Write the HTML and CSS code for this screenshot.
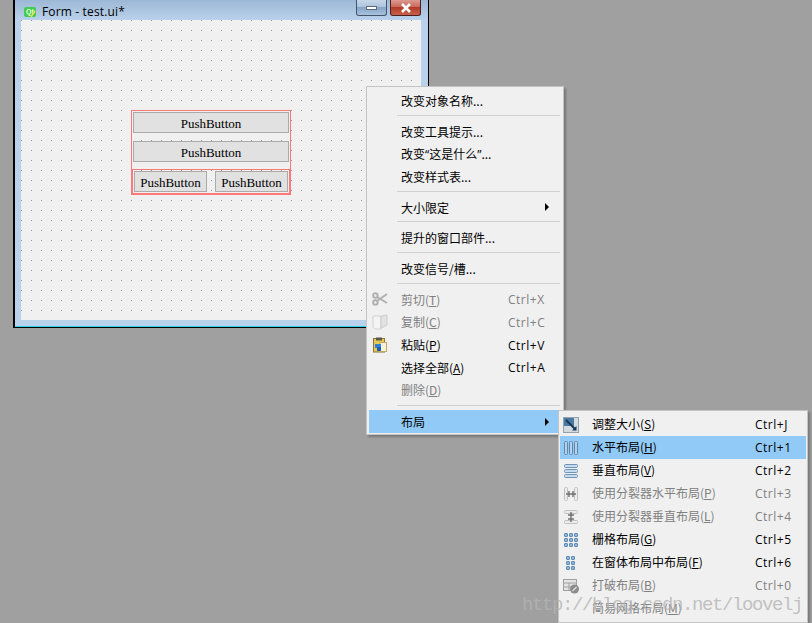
FILE: index.html
```html
<!DOCTYPE html>
<html lang="zh-CN">
  <head>
    <meta charset="UTF-8" />
    <title>Form - test.ui*</title>
    <link rel="stylesheet" href="styles.css">
  </head>
  <body>
    <div class="window">
      <div class="titlebar">
        <span class="qt-icon">
          <span class="qt-text">Qt</span>
          <svg class="qt-pen" width="6" height="7" viewBox="0 0 6 7"><path d="M1 7l4-6" stroke="#f4e04a" stroke-width="1.4" fill="none"/></svg>
        </span>
        <span class="title">Form - test.ui*</span>
        <span class="win-btn min-btn"><span class="min-dash"></span></span>
        <span class="win-btn close-btn">
          <svg width="14" height="10" viewBox="0 0 14 10"><path d="M3 1l8 8M11 1l-8 8" stroke="#fff" stroke-width="2.6" fill="none"/></svg>
        </span>
      </div>
      <div class="form">
        <div class="layout-box">
          <div class="push-btn">PushButton</div>
          <div class="push-btn">PushButton</div>
          <div class="layout-row">
            <div class="push-btn">PushButton</div>
            <div class="push-btn">PushButton</div>
          </div>
        </div>
      </div>
    </div>

    <div class="menu main-menu">
      <div class="item"><span class="slot"></span><span class="label">改变对象名称...</span></div>
      <div class="sep"></div>
      <div class="item"><span class="slot"></span><span class="label">改变工具提示...</span></div>
      <div class="item"><span class="slot"></span><span class="label">改变<span class="quote">“</span>这是什么<span class="quote">”</span>...</span></div>
      <div class="item"><span class="slot"></span><span class="label">改变样式表...</span></div>
      <div class="sep"></div>
      <div class="item"><span class="slot"></span><span class="label">大小限定</span><span class="arrow"></span></div>
      <div class="sep"></div>
      <div class="item"><span class="slot"></span><span class="label">提升的窗口部件...</span></div>
      <div class="sep"></div>
      <div class="item"><span class="slot"></span><span class="label">改变信号/槽...</span></div>
      <div class="sep"></div>
      <div class="item off">
        <span class="slot">
          <svg width="16" height="16" viewBox="0 0 16 16"><g fill="none" stroke="#b0b0b0" stroke-width="2"><path d="M5 6L15 12M5 10L15 3"/><circle cx="3.4" cy="4.5" r="2.2"/><circle cx="3.4" cy="11.5" r="2.2"/></g></svg>
        </span>
        <span class="label">剪切(<u>T</u>)</span><span class="key">Ctrl+X</span>
      </div>
      <div class="item off">
        <span class="slot">
          <svg width="16" height="16" viewBox="0 0 16 16"><path d="M1 2h7l1 1v12H3l-2-2z" fill="#f4f4f4" stroke="#d0d0d0"/><path d="M9 2l6-1v10l-6 3z" fill="#e2e2e2" stroke="#cccccc"/></svg>
        </span>
        <span class="label">复制(<u>C</u>)</span><span class="key">Ctrl+C</span>
      </div>
      <div class="item">
        <span class="slot">
          <svg width="16" height="16" viewBox="0 0 16 16"><rect x="1.5" y="1.5" width="11" height="13.5" fill="#e8c858" stroke="#8a7430"/><rect x="4" y="0.5" width="6" height="3" fill="#5a5a4a"/><rect x="8" y="5.5" width="6.5" height="9" fill="#f8f2d8" stroke="#c0a860"/><path d="M3 7h6v4H3z" fill="#2f7fd6"/><path d="M5 10h4v4H5z" fill="#1d5fb0"/></svg>
        </span>
        <span class="label">粘贴(<u>P</u>)</span><span class="key">Ctrl+V</span>
      </div>
      <div class="item"><span class="slot"></span><span class="label">选择全部(<u>A</u>)</span><span class="key">Ctrl+A</span></div>
      <div class="item off"><span class="slot"></span><span class="label">删除(<u>D</u>)</span></div>
      <div class="sep sep-wide"></div>
      <div class="item active"><span class="slot"></span><span class="label">布局</span><span class="arrow"></span></div>
    </div>

    <div class="menu sub-menu">
      <div class="item">
        <span class="slot">
          <svg width="16" height="16" viewBox="0 0 16 16"><rect x="0.5" y="0.5" width="15" height="15" fill="#d4dbe0" stroke="#94a2ae"/><path d="M1 1h10v8H1z" fill="#4a7aa0"/><path d="M3 3l9 9" stroke="#12385c" stroke-width="2"/><path d="M13.5 13.5H9L13.5 9z" fill="#12385c"/></svg>
        </span>
        <span class="label">调整大小(<u>S</u>)</span><span class="key">Ctrl+J</span>
      </div>
      <div class="item active">
        <span class="slot">
          <svg width="16" height="16" viewBox="0 0 16 16"><g fill="#b4d2ec" stroke="#5f86a8"><rect x="1.5" y="1.5" width="3" height="13" rx="1"/><rect x="6.5" y="1.5" width="3" height="13" rx="1"/><rect x="11.5" y="1.5" width="3" height="13" rx="1"/></g></svg>
        </span>
        <span class="label">水平布局(<u>H</u>)</span><span class="key">Ctrl+1</span>
      </div>
      <div class="item">
        <span class="slot">
          <svg width="16" height="16" viewBox="0 0 16 16"><g fill="#c5dcf0" stroke="#6f93b4"><rect x="1.5" y="1.5" width="13" height="3" rx="1"/><rect x="1.5" y="6.5" width="13" height="3" rx="1"/><rect x="1.5" y="11.5" width="13" height="3" rx="1"/></g></svg>
        </span>
        <span class="label">垂直布局(<u>V</u>)</span><span class="key">Ctrl+2</span>
      </div>
      <div class="item off">
        <span class="slot">
          <svg width="16" height="16" viewBox="0 0 16 16"><g fill="#ececec" stroke="#c0c0c0"><rect x="1.5" y="1.5" width="3" height="13" rx="1"/><rect x="11.5" y="1.5" width="3" height="13" rx="1"/></g><path d="M3 8h10M6 5v6M10 5v6" stroke="#707070" stroke-width="1.4"/></svg>
        </span>
        <span class="label">使用分裂器水平布局(<u>P</u>)</span><span class="key">Ctrl+3</span>
      </div>
      <div class="item off">
        <span class="slot">
          <svg width="16" height="16" viewBox="0 0 16 16"><g fill="#ececec" stroke="#c0c0c0"><rect x="1.5" y="1.5" width="13" height="3" rx="1"/><rect x="1.5" y="11.5" width="13" height="3" rx="1"/></g><path d="M8 3v10M5 6h6M5 10h6" stroke="#707070" stroke-width="1.4"/></svg>
        </span>
        <span class="label">使用分裂器垂直布局(<u>L</u>)</span><span class="key">Ctrl+4</span>
      </div>
      <div class="item">
        <span class="slot">
          <svg width="16" height="16" viewBox="0 0 16 16"><g fill="#8fb6dc" stroke="#5f8ab2"><rect x="1.5" y="1.5" width="3" height="3" rx="0.5"/><rect x="6.5" y="1.5" width="3" height="3" rx="0.5"/><rect x="11.5" y="1.5" width="3" height="3" rx="0.5"/><rect x="1.5" y="6.5" width="3" height="3" rx="0.5"/><rect x="6.5" y="6.5" width="3" height="3" rx="0.5"/><rect x="11.5" y="6.5" width="3" height="3" rx="0.5"/><rect x="1.5" y="11.5" width="3" height="3" rx="0.5"/><rect x="6.5" y="11.5" width="3" height="3" rx="0.5"/><rect x="11.5" y="11.5" width="3" height="3" rx="0.5"/></g></svg>
        </span>
        <span class="label">栅格布局(<u>G</u>)</span><span class="key">Ctrl+5</span>
      </div>
      <div class="item">
        <span class="slot">
          <svg width="16" height="16" viewBox="0 0 16 16"><g fill="#8fb6dc" stroke="#5f8ab2"><rect x="3.5" y="1.5" width="3" height="3" rx="0.5"/><rect x="8.5" y="1.5" width="3" height="3" rx="0.5"/><rect x="3.5" y="6.5" width="3" height="3" rx="0.5"/><rect x="8.5" y="6.5" width="3" height="3" rx="0.5"/><rect x="3.5" y="11.5" width="3" height="3" rx="0.5"/><rect x="8.5" y="11.5" width="3" height="3" rx="0.5"/></g></svg>
        </span>
        <span class="label">在窗体布局中布局(<u>F</u>)</span><span class="key">Ctrl+6</span>
      </div>
      <div class="item off">
        <span class="slot">
          <svg width="16" height="16" viewBox="0 0 16 16"><rect x="0.5" y="1.5" width="13" height="11" fill="#e4e4e4" stroke="#a0a0a0"/><path d="M1 5h12M1 9h12M6 5v8" stroke="#a0a0a0"/><circle cx="11.5" cy="11" r="4.5" fill="#8c8c8c"/><path d="M9.5 13l4-4" stroke="#e0e0e0" stroke-width="1.2"/></svg>
        </span>
        <span class="label">打破布局(<u>B</u>)</span><span class="key">Ctrl+0</span>
      </div>
      <div class="item off"><span class="slot"></span><span class="label">简易网格布局(<u>M</u>)</span></div>
    </div>

    <div class="watermark">http://blog.csdn.net/loovelj</div>
  </body>
</html>
```

FILE: styles.css
```css
body {
  background-color: #a0a0a0;
  margin: 0;
  padding: 0;
  width: 812px;
  height: 623px;
  overflow: hidden;
  position: relative;
  font-family: "Noto Sans CJK SC", sans-serif;
  font-size: 12px;
  color: #000;
}

/* designer window */
.window {
  position: absolute;
  left: 13px;
  top: 0;
  width: 416px;
  height: 328px;
  box-sizing: border-box;
  display: flex;
  flex-direction: column;
  background-color: #b9d1ea;
  border-left: 2px solid #000;
  border-right: 1px solid #000;
  border-bottom: 1px solid #000;
  box-shadow: inset 0 -1px 0 #2fd3e6;
}
.titlebar {
  height: 20px;
  flex: none;
  display: flex;
  padding: 0 7px 0 9px;
  background: linear-gradient(#9db8d6, #b9d1ea);
}
.qt-icon {
  position: relative;
  width: 12px;
  height: 10px;
  margin-top: 7px;
  background-color: #41cd52;
  border-radius: 2px;
  display: flex;
  align-items: center;
  justify-content: center;
}
.qt-text {
  font-family: "Liberation Sans", sans-serif;
  font-size: 7px;
  font-weight: bold;
  line-height: 10px;
  color: #e8ffd8;
}
.qt-pen {
  position: absolute;
  right: 0;
  bottom: 0;
}
.title {
  font-family: "Open Sans", sans-serif;
  font-size: 12px;
  letter-spacing: 0.15px;
  line-height: 16px;
  margin: 4px 0 0 6px;
  color: #000;
}
.win-btn {
  height: 16px;
  width: 31px;
  box-sizing: border-box;
  border: 1px solid #44546a;
  border-top: none;
  border-radius: 0 0 3px 3px;
  display: flex;
  align-items: center;
  justify-content: center;
}
.min-btn {
  margin-left: auto;
  background: linear-gradient(#c6d6e8 0, #aec4dc 45%, #86a4c6 50%, #a9c2de 100%);
}
.min-dash {
  width: 11px;
  height: 4px;
  box-sizing: border-box;
  background-color: #fff;
  border: 1px solid #5a6a7c;
}
.close-btn {
  margin-left: 3px;
  border-color: #4e1f1c;
  background: linear-gradient(#dc9a90 0, #c96a5c 45%, #b23a28 50%, #c8614c 100%);
}

.form {
  position: relative;
  flex: 1;
  margin: 0 7px 7px 6px;
  background-color: #f0f0f0;
  background-image: conic-gradient(at 1px 1px, transparent 270deg, #999 0);
  background-size: 10px 10px;
}
.layout-box {
  position: absolute;
  left: 110px;
  top: 90px;
  width: 160px;
  height: 85px;
  box-sizing: border-box;
  border: 1px solid #ff7878;
  padding: 1px 1px 0;
  display: flex;
  flex-direction: column;
  gap: 8px;
}
.layout-row {
  display: flex;
  gap: 8px;
  margin: -1px -1px 0 -1px;
  padding: 1px;
  border: 1px solid #ff7878;
}
.push-btn {
  flex: 1;
  height: 21px;
  box-sizing: border-box;
  border: 1px solid #aaa;
  background-color: #e1e1e1;
  font-family: "Liberation Serif", serif;
  font-size: 13px;
  line-height: 21px;
  text-align: center;
}

/* context menus */
.menu {
  position: absolute;
  box-sizing: border-box;
  background-color: #f0f0f0;
  border: 1px solid #c4c4c4;
  box-shadow: 2px 2px 2px rgba(0, 0, 0, 0.25);
}
.main-menu {
  left: 366px;
  top: 86px;
  width: 198px;
  height: 349px;
  padding: 2px 0 0 2px;
}
.sub-menu {
  left: 558px;
  top: 410px;
  width: 250px;
  height: 213px;
  padding: 2px 1px 0 1px;
}
.item {
  display: flex;
  align-items: center;
  height: 22.7px;
  line-height: 22px;
}
.sub-menu .item {
  height: 23px;
}
.item.active {
  background-color: #91c9f7;
}
.item.off {
  color: #808080;
}
.slot {
  width: 32px;
  height: 16px;
  flex: none;
  box-sizing: border-box;
  padding-left: 3px;
}
.slot svg {
  display: block;
}
.label {
  flex: 1;
  white-space: nowrap;
  padding-top: 1px;
}
.sub-menu .label {
  padding-top: 0;
  padding-bottom: 1px;
}
.quote {
  font-family: "Open Sans", sans-serif;
}
.key {
  font-family: "Open Sans", sans-serif;
  letter-spacing: 0.5px;
  width: 55px;
  flex: none;
  padding-top: 2px;
}
.sub-menu .key {
  width: 51px;
  padding-top: 0;
}
.arrow {
  width: 0;
  height: 0;
  margin-right: 14px;
  border-left: 4px solid #000;
  border-top: 4px solid transparent;
  border-bottom: 4px solid transparent;
}
.sep {
  height: 1px;
  margin: 3px 3px 4px 28px;
  background-color: #d0d0d0;
}
.sep-wide {
  margin-top: 4px;
}

.watermark {
  position: absolute;
  left: 522px;
  top: 593px;
  font-family: "Liberation Mono", monospace;
  font-size: 19px;
  letter-spacing: -1.4px;
  line-height: 24px;
  color: rgba(180, 180, 180, 0.8);
  white-space: nowrap;
}
```
